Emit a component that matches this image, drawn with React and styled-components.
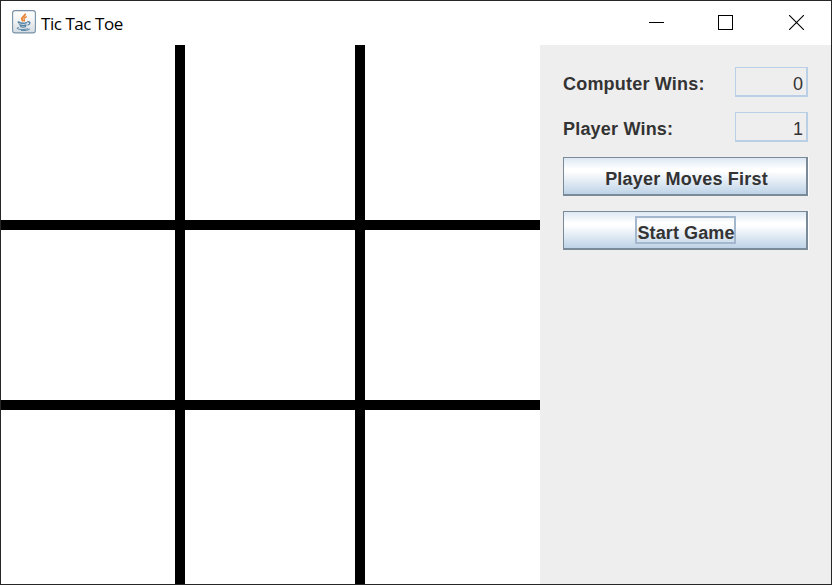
import React from "react";
import styled, { createGlobalStyle } from "styled-components";

const GlobalStyle = createGlobalStyle`
  * { box-sizing: border-box; }
  body { margin: 0; overflow: hidden; }
`;

const Window = styled.div`
  width: 832px;
  height: 585px;
  display: flex;
  flex-direction: column;
  border: 1px solid #272526;
  background: #fff;
  color: #333;
  font-family: "Liberation Sans", Arial, sans-serif;
  font-size: 18px;
`;

const TitleBar = styled.header`
  height: 44px;
  flex: none;
  display: flex;
  align-items: flex-start;
  padding-left: 11px;
`;

const AppIcon = styled.svg`
  width: 24px;
  height: 24px;
  margin-top: 9px;
  flex: none;
`;

const Title = styled.h1`
  margin: 11px 0 0 5px;
  font: 400 17px/24px "Open Sans", sans-serif;
  letter-spacing: -0.45px;
  color: #000;
  white-space: nowrap;
`;

const WindowControls = styled.div`
  display: flex;
  margin-left: auto;
`;

const ControlButton = styled.button`
  width: ${(p) => p.$width}px;
  height: 43px;
  padding: 0;
  border: 0;
  background: none;
  display: flex;
  align-items: center;
  justify-content: center;
  svg { display: block; }
`;

const Content = styled.main`
  flex: 1;
  min-height: 0;
  display: flex;
`;

const Board = styled.div`
  width: 539px;
  flex: none;
  display: grid;
  grid-template-columns: 174px 170px 175px;
  grid-template-rows: 175px 170px 174px;
  gap: 10px;
  background: #000;
`;

const Cell = styled.div`
  background: #fff;
`;

const Sidebar = styled.aside`
  flex: 1;
  display: flex;
  flex-direction: column;
  gap: 15px;
  padding: 22px 23px 0;
  background: #eee;
`;

const ScoreRow = styled.div`
  width: 245px;
  height: 30px;
  display: flex;
  align-items: center;
  justify-content: space-between;
`;

const Label = styled.label`
  font-weight: 700;
  line-height: 20px;
  padding-top: 4px;
  letter-spacing: 0.2px;
`;

const ScoreField = styled.output`
  width: 73px;
  height: 30px;
  border: 1px solid #b8cfe5;
  border-right-width: 2px;
  border-bottom-width: 2px;
  padding: 4px 3px 0 0;
  line-height: 24px;
  text-align: right;
`;

const GameButton = styled.button`
  width: 245px;
  height: 39px;
  flex: none;
  display: flex;
  align-items: center;
  justify-content: center;
  padding: 5px 0 0 3px;
  border: 1px solid #7a8a99;
  border-right-width: 2px;
  border-bottom-width: 2px;
  box-shadow: 1px 0 0 #fff;
  background: linear-gradient(#dde8f3 0%, #fff 30%, #fff 37%, #bed3e7 100%);
  color: #333;
  font: 700 18px/20px "Liberation Sans", Arial, sans-serif;
  letter-spacing: 0.2px;
  white-space: nowrap;
`;

const FocusLabel = styled.span`
  width: 101px;
  height: 28px;
  margin: -6px 0 0 -3px;
  padding: 5px 0 0 1px;
  border: 2px solid #a3b8cc;
  letter-spacing: 0.1px;
`;

function JavaIcon() {
  return (
    <AppIcon viewBox="0 0 24 24" fill="none">
      <defs>
        <linearGradient id="tile" x1="0" y1="0" x2="0" y2="1">
          <stop offset="0" stopColor="#fff" />
          <stop offset="0.45" stopColor="#f2f3f4" />
          <stop offset="1" stopColor="#d3dce3" />
        </linearGradient>
      </defs>
      <rect x="0.6" y="0.6" width="22.8" height="22.3" rx="2.4" fill="url(#tile)" stroke="#7891a6" strokeWidth="1.1" />
      <path d="M13.2 3.7c.8 2-3.7 3.3-3.4 5.3.1 1 1.1 1.7 1.5 2.4" stroke="#e98232" strokeWidth="1.9" />
      <path d="M14.8 6.6c-1.6.6-3 1.4-2.8 2.5.2.8 1 1.1.3 2.2" stroke="#e98232" strokeWidth="1.3" />
      <path d="M7.6 11.8c-1.3.2-1.9.7-.6 1 2.3.5 6.3.4 8.1-.2M15.3 11.8c3.3-.7 3.4 2.4.3 3.3M7.6 14.2c-.5 1.3 5.4 1.5 6.9.6M8.3 16.1c.3 1.3 4.4 1.2 5.7.3" stroke="#5482a3" strokeWidth="1.4" />
      <path d="M6.8 17.5c-2.6.2-2 1.5 1 1.8 3.6.4 8 0 8.4-1.1M9 20.4c4 .3 7.8-.2 8.9-1.5" stroke="#5482a3" strokeWidth="1" />
    </AppIcon>
  );
}

export default function App() {
  return (
    <Window>
      <GlobalStyle />
      <TitleBar>
        <JavaIcon />
        <Title>Tic Tac Toe</Title>
        <WindowControls>
          <ControlButton aria-label="Minimize" $width={65}>
            <svg width="15" height="15" shapeRendering="crispEdges"><path d="M0 7.5h15" stroke="#000" /></svg>
          </ControlButton>
          <ControlButton aria-label="Maximize" $width={73}>
            <svg width="15" height="15" shapeRendering="crispEdges"><path d="M.5.5h14v14H.5z" fill="none" stroke="#000" /></svg>
          </ControlButton>
          <ControlButton aria-label="Close" $width={69}>
            <svg width="15" height="15"><path d="M0 0L15 15M15 0L0 15" stroke="#000" strokeWidth="1.1" /></svg>
          </ControlButton>
        </WindowControls>
      </TitleBar>
      <Content>
        <Board>
          {Array.from({ length: 9 }, (_, i) => <Cell key={i} />)}
        </Board>
        <Sidebar>
          <ScoreRow>
            <Label>Computer Wins:</Label>
            <ScoreField>0</ScoreField>
          </ScoreRow>
          <ScoreRow>
            <Label>Player Wins:</Label>
            <ScoreField>1</ScoreField>
          </ScoreRow>
          <GameButton>Player Moves First</GameButton>
          <GameButton>
            <FocusLabel>Start Game</FocusLabel>
          </GameButton>
        </Sidebar>
      </Content>
    </Window>
  );
}
